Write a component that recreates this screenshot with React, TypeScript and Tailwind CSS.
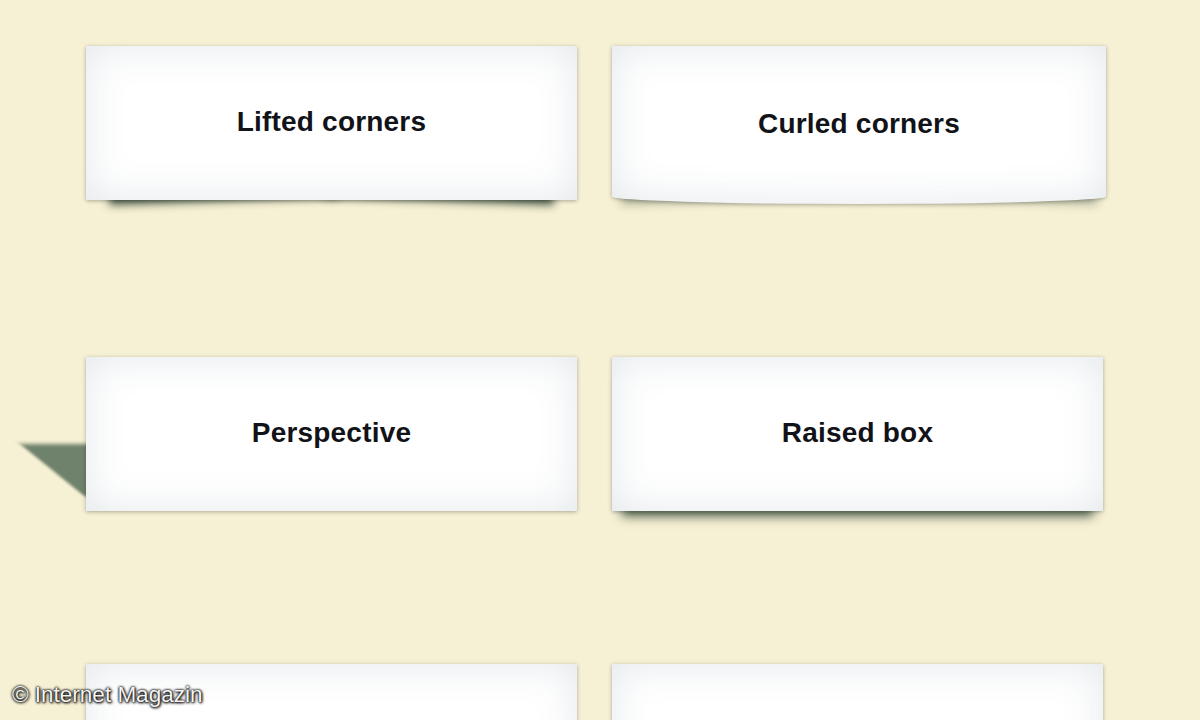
import React from "react";

const cardBase =
  "relative flex items-center justify-center bg-white text-[28px] font-bold tracking-[0.2px] text-[#111318] shadow-[0_1px_4px_rgba(0,0,0,0.3),inset_0_0_40px_rgba(40,70,90,0.13)]";

function Lifted() {
  return (
    <div className={`${cardBase} h-[154px]`}>
      <span className="absolute bottom-[15px] left-[22px] -z-10 h-[30%] w-[47%] -rotate-2 shadow-[0_16px_9px_rgba(40,62,45,0.85)]" />
      <span className="absolute bottom-[15px] right-[22px] -z-10 h-[30%] w-[47%] rotate-2 shadow-[0_16px_9px_rgba(40,62,45,0.85)]" />
      <span className="pb-[2px]">Lifted corners</span>
    </div>
  );
}

function Curled() {
  return (
    <div className={`${cardBase} h-[158px] w-[494px] rounded-[0_0_260px_260px/0_0_8px_8px]`}>
      <span className="absolute bottom-[12px] left-[14px] -z-10 h-[50%] w-1/2 -rotate-2 skew-x-[-8deg] shadow-[0_8px_10px_rgba(40,62,45,0.35)]" />
      <span className="absolute bottom-[12px] right-[14px] -z-10 h-[50%] w-1/2 rotate-2 skew-x-[8deg] shadow-[0_8px_10px_rgba(40,62,45,0.35)]" />
      <span className="pb-[2px]">Curled corners</span>
    </div>
  );
}

function Perspective() {
  return (
    <div className={`${cardBase} h-[154px]`}>
      <span className="absolute left-[-66px] top-[87px] -z-10 h-[54px] w-[220px] origin-top-left skew-x-[51deg] bg-[rgba(60,88,66,0.72)] blur-[2px]" />
      <span className="pb-[2px]">Perspective</span>
    </div>
  );
}

function Raised() {
  return (
    <div className="relative flex h-[154px] items-center justify-center bg-white text-[28px] font-bold tracking-[0.2px] text-[#111318] shadow-[0_15px_10px_-10px_rgba(40,62,45,0.85),0_1px_4px_rgba(0,0,0,0.3),inset_0_0_40px_rgba(40,70,90,0.13)]">
      <span className="pb-[2px]">Raised box</span>
    </div>
  );
}

function Plain() {
  return <div className={`${cardBase} h-[154px]`} />;
}

export default function App() {
  return (
    <div
      className="relative isolate h-[720px] w-[1200px] overflow-hidden bg-[#f6f0d4]"
      style={{ fontFamily: '"Liberation Sans", Arial, sans-serif' }}
    >
      <div className="grid grid-cols-[491px_491px] gap-x-[35px] pl-[86px] pt-[46px]">
        <Lifted />
        <Curled />
        <div className="col-span-2 h-[153px]" />
        <Perspective />
        <Raised />
        <div className="col-span-2 h-[153px]" />
        <Plain />
        <Plain />
      </div>
      <div className="absolute bottom-[8px] left-[12px] text-[22.5px] text-[#f4f4f4] [text-shadow:0_0_2px_#000,0_0_3px_#000,1px_1px_3px_#000]">
        © Internet Magazin
      </div>
    </div>
  );
}
